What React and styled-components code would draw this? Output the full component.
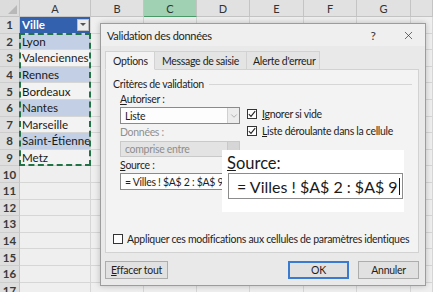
import React from 'react';
import styled, { createGlobalStyle } from 'styled-components';
import { X, ChevronDown } from 'lucide-react';

const GlobalStyle = createGlobalStyle`
  html, body {
    margin: 0;
    padding: 0;
    background: #efefef;
    overflow: hidden;
  }
  * {
    box-sizing: border-box;
  }
`;

const Page = styled.div`
  position: relative;
  width: 433px;
  height: 292px;
  overflow: hidden;
`;

const Sheet = styled.div`
  display: grid;
  grid-template-columns: 20px 71px 53px 53px 53px 54px 53px 54px 1fr;
  grid-template-rows: 17px repeat(17, 16.6px);
  font-family: Lato, 'Noto Sans', sans-serif;
`;

const Corner = styled.div`
  grid-row: 1;
  grid-column: 1;
  position: relative;
  background: #dcdcdc;
  border-right: 1px solid #c4c4c4;
  border-bottom: 1px solid #c4c4c4;

  &::after {
    content: '';
    position: absolute;
    right: 2px;
    bottom: 2px;
    border-left: 9px solid transparent;
    border-bottom: 9px solid #b8b8b8;
  }
`;

const ColHead = styled.div`
  grid-row: 1;
  grid-column: ${(p) => p.$c};
  display: flex;
  align-items: center;
  justify-content: center;
  background: ${(p) => (p.$active ? '#9fd1b2' : '#e1e1e1')};
  border-right: 1px solid #c4c4c4;
  border-bottom: 1px solid ${(p) => (p.$active ? '#4a9a6a' : '#c4c4c4')};
  color: #333;
  font-size: 11px;
`;

const RowHead = styled.div`
  grid-row: ${(p) => p.$r};
  grid-column: 1;
  display: flex;
  align-items: center;
  justify-content: center;
  background: #dedede;
  border-right: 1px solid #c4c4c4;
  border-bottom: 1px solid #cdcdcd;
  color: #3a3a3a;
  font-size: 11.5px;
  font-weight: 700;
`;

const Cell = styled.div`
  grid-row: ${(p) => p.$r};
  grid-column: ${(p) => p.$c};
  display: flex;
  align-items: center;
  gap: 2px;
  padding-left: 2px;
  background: ${(p) => p.$bg || '#efefef'};
  border-right: 1px solid #d6d6d6;
  border-bottom: 1px solid #d6d6d6;
  color: ${(p) => (p.$head ? '#fff' : '#1a1a1a')};
  font-size: 11.6px;
  font-weight: ${(p) => (p.$head ? 700 : 400)};
  white-space: nowrap;
  overflow: hidden;
`;

const FilterBtn = styled.span`
  margin-left: auto;
  margin-right: 1px;
  width: 12px;
  height: 12px;
  display: flex;
  align-items: center;
  justify-content: center;
  background: #ececec;
  border: 1px solid #bdbdbd;

  &::after {
    content: '';
    border-left: 3px solid transparent;
    border-right: 3px solid transparent;
    border-top: 3px solid #555;
  }
`;

const Marquee = styled.div`
  grid-column: 2;
  grid-row: 3 / 11;
  z-index: 1;
  border: 2px dashed #217346;
  pointer-events: none;
  margin: -1px 0 0 -1px;
`;

const Dialog = styled.div`
  position: absolute;
  left: 100px;
  top: 23px;
  width: 326px;
  height: 263px;
  z-index: 2;
  background: #e9e9e9;
  border: 1px solid #9c9c9c;
  box-shadow: 0 0 6px rgba(0, 0, 0, 0.22);
  font-family: Lato, 'Noto Sans', sans-serif;
  font-size: 10.5px;
  letter-spacing: -0.3px;
  color: #1e1e1e;
  display: flex;
  flex-direction: column;
`;

const TitleBar = styled.div`
  height: 24px;
  display: flex;
  align-items: center;
  padding: 0 10px 0 6px;
  background: #efefef;
  font-size: 11px;
`;

const Title = styled.span`
  flex: 1;
`;

const TitleAction = styled.span`
  display: flex;
  align-items: center;
  justify-content: center;
  width: 14px;
  margin-left: 21px;
  color: #333;
  font-size: 12px;
`;

const Body = styled.div`
  flex: 1;
  display: flex;
  flex-direction: column;
  padding: 5px 6px 6px 4px;
`;

const Tabs = styled.div`
  display: flex;
  height: 18px;
`;

const Tab = styled.div`
  width: ${(p) => p.$w}px;
  display: flex;
  align-items: center;
  padding-left: ${(p) => p.$pad || 7}px;
  white-space: nowrap;
  background: ${(p) => (p.$active ? '#f3f3f3' : '#e4e4e4')};
  border: 1px solid #d2d2d2;
  border-bottom: ${(p) => (p.$active ? '1px solid #f3f3f3' : '1px solid #d2d2d2')};
  border-left: ${(p) => (p.$first || p.$active ? '1px solid #d2d2d2' : 'none')};
  margin-bottom: -1px;
  position: relative;
  z-index: ${(p) => (p.$active ? 1 : 0)};
`;

const Panel = styled.div`
  height: 184px;
  background: #f3f3f3;
  border: 1px solid #d2d2d2;
  display: flex;
  flex-direction: column;
  padding: 7px 6px 6px 7px;
`;

const GroupHead = styled.div`
  display: flex;
  align-items: center;
  gap: 5px;
  height: 14px;

  &::after {
    content: '';
    flex: 1;
    height: 1px;
    background: #d6d6d6;
  }
`;

const Criteria = styled.div`
  display: grid;
  grid-template-columns: 120px 1fr;
  column-gap: 7px;
  padding-left: 7px;
`;

const Column = styled.div`
  display: flex;
  flex-direction: column;
`;

const Label = styled.div`
  height: ${(p) => p.$h || 15}px;
  display: flex;
  align-items: center;
  color: ${(p) => (p.$muted ? '#8f8f8f' : '#1e1e1e')};
`;

const Key = styled.span`
  text-decoration: underline;
  text-underline-offset: 1px;
`;

const Select = styled.div`
  height: ${(p) => p.$h || 17}px;
  margin-top: 1px;
  display: flex;
  align-items: stretch;
  background: ${(p) => (p.$disabled ? '#e3e3e3' : '#fdfdfd')};
  border: 1px solid ${(p) => (p.$disabled ? '#c9c9c9' : '#8a8a8a')};
  color: ${(p) => (p.$disabled ? '#8e8e8e' : '#1e1e1e')};
`;

const SelectText = styled.span`
  flex: 1;
  display: flex;
  align-items: center;
  padding-left: 4px;
`;

const SelectArrow = styled.span`
  width: 12px;
  display: flex;
  align-items: center;
  justify-content: center;
  background: ${(p) => (p.$disabled ? '#d6d6d6' : '#ececec')};
  border-left: 1px solid ${(p) => (p.$disabled ? '#c9c9c9' : '#d0d0d0')};
  color: #777;
`;

const TextInput = styled.div`
  width: 280px;
  height: 17px;
  margin-top: 1px;
  display: flex;
  align-items: center;
  padding-left: 4px;
  background: #fdfdfd;
  border: 1px solid #8a8a8a;
  white-space: nowrap;
`;

const Caret = styled.span`
  display: inline-block;
  width: 1px;
  height: ${(p) => p.$h || 11}px;
  background: #111;
  margin-left: 1px;
  vertical-align: middle;
`;

const Checks = styled.div`
  display: flex;
  flex-direction: column;
  padding-top: 14px;
`;

const CheckRow = styled.label`
  height: 17px;
  display: flex;
  align-items: center;
  gap: 5px;
  white-space: nowrap;
`;

const Box = styled.span`
  width: 10px;
  height: 10px;
  flex: none;
  display: flex;
  align-items: center;
  justify-content: center;
  background: #fdfdfd;
  border: 1px solid #333;
`;

const ApplyRow = styled(CheckRow)`
  margin-top: auto;
  height: 14px;
  gap: 4px;
`;

const Footer = styled.div`
  display: flex;
  gap: 9px;
  margin-top: 8px;
`;

const Button = styled.div`
  width: ${(p) => p.$w || 61}px;
  height: 18px;
  display: flex;
  align-items: center;
  justify-content: center;
  background: #e1e1e1;
  border: ${(p) => (p.$primary ? '2px solid #3a7bd0' : '1px solid #adadad')};
  margin-left: ${(p) => (p.$push ? 'auto' : '0')};
`;

const Callout = styled.div`
  position: absolute;
  left: 222px;
  top: 150px;
  width: 182px;
  height: 62px;
  z-index: 3;
  background: #ffffff;
  padding: 2px 1px 0 6px;
  font-family: Lato, 'Noto Sans', sans-serif;
  color: #1a1a1a;
`;

const CalloutLabel = styled.div`
  height: 21px;
  display: flex;
  align-items: center;
  margin-left: -1px;
  font-size: 16.5px;
`;

const CalloutInput = styled.div`
  height: 26px;
  display: flex;
  align-items: center;
  padding-left: 8px;
  border: 1px solid #8c8c8c;
  font-size: 16px;
  white-space: nowrap;
`;

const Check = () => (
  <svg width="8" height="8" viewBox="0 0 8 8">
    <path d="M0.8 4.2 L3 6.4 L7.2 1.2" fill="none" stroke="#222" strokeWidth="1.1" />
  </svg>
);

const columns = ['A', 'B', 'C', 'D', 'E', 'F', 'G', ''];
const cities = ['Lyon', 'Valenciennes', 'Rennes', 'Bordeaux', 'Nantes', 'Marseille', 'Saint-Étienne', 'Metz'];

const SheetGrid = () => {
  const rows = [];
  for (let r = 1; r <= 17; r++) {
    const gr = r + 1;
    rows.push(
      <RowHead key={`h${r}`} $r={gr}>
        {r}
      </RowHead>
    );
    columns.forEach((c, i) => {
      const gc = i + 2;
      if (i === 0 && r === 1) {
        rows.push(
          <Cell key={`c${r}-${i}`} $r={gr} $c={gc} $bg="#3461ad" $head>
            Ville
            <FilterBtn />
          </Cell>
        );
      } else if (i === 0 && r <= 9) {
        rows.push(
          <Cell key={`c${r}-${i}`} $r={gr} $c={gc} $bg={r % 2 === 0 ? '#c3cfe4' : '#f3f3f3'}>
            {cities[r - 2]}
          </Cell>
        );
      } else {
        rows.push(<Cell key={`c${r}-${i}`} $r={gr} $c={gc} />);
      }
    });
  }
  return (
    <Sheet>
      <Corner />
      {columns.map((c, i) => (
        <ColHead key={i} $c={i + 2} $active={c === 'C'}>
          {c}
        </ColHead>
      ))}
      {rows}
      <Marquee />
    </Sheet>
  );
};

export default function App() {
  return (
    <Page>
      <GlobalStyle />
      <SheetGrid />
      <Dialog>
        <TitleBar>
          <Title>Validation des données</Title>
          <TitleAction>?</TitleAction>
          <TitleAction>
            <X size={13} strokeWidth={1.3} />
          </TitleAction>
        </TitleBar>
        <Body>
          <Tabs>
            <Tab $w={50} $active $first $pad={7}>
              Options
            </Tab>
            <Tab $w={92} $pad={7}>
              Message de saisie
            </Tab>
            <Tab $w={73} $pad={6}>
              Alerte d'erreur
            </Tab>
          </Tabs>
          <Panel>
            <GroupHead>Critères de validation</GroupHead>
            <Criteria>
              <Column>
                <Label>
                  <span>
                    <Key>A</Key>utoriser :
                  </span>
                </Label>
                <Select>
                  <SelectText>Liste</SelectText>
                  <SelectArrow>
                    <ChevronDown size={10} strokeWidth={1.2} />
                  </SelectArrow>
                </Select>
                <Label $h={16} $muted>
                  Données :
                </Label>
                <Select $disabled $h={16}>
                  <SelectText>comprise entre</SelectText>
                  <SelectArrow $disabled />
                </Select>
                <Label $h={15}>
                  <span>
                    <Key>S</Key>ource :
                  </span>
                </Label>
                <TextInput>
                  = Villes ! $A$ 2 : $A$ 9<Caret />
                </TextInput>
              </Column>
              <Checks>
                <CheckRow>
                  <Box>
                    <Check />
                  </Box>
                  <span>
                    <Key>I</Key>gnorer si vide
                  </span>
                </CheckRow>
                <CheckRow>
                  <Box>
                    <Check />
                  </Box>
                  <span>
                    <Key>L</Key>iste déroulante dans la cellule
                  </span>
                </CheckRow>
              </Checks>
            </Criteria>
            <ApplyRow>
              <Box />
              <span>Appliquer ces modifications aux cellules de paramètres identiques</span>
            </ApplyRow>
          </Panel>
          <Footer>
            <Button $w={63}>
              <span>
                <Key>E</Key>ffacer tout
              </span>
            </Button>
            <Button $push $primary>
              OK
            </Button>
            <Button>Annuler</Button>
          </Footer>
        </Body>
      </Dialog>
      <Callout>
        <CalloutLabel>
          <span>
            <Key>S</Key>ource:
          </span>
        </CalloutLabel>
        <CalloutInput>
          = Villes ! $A$ 2 : $A$ 9<Caret $h={17} />
        </CalloutInput>
      </Callout>
    </Page>
  );
}
